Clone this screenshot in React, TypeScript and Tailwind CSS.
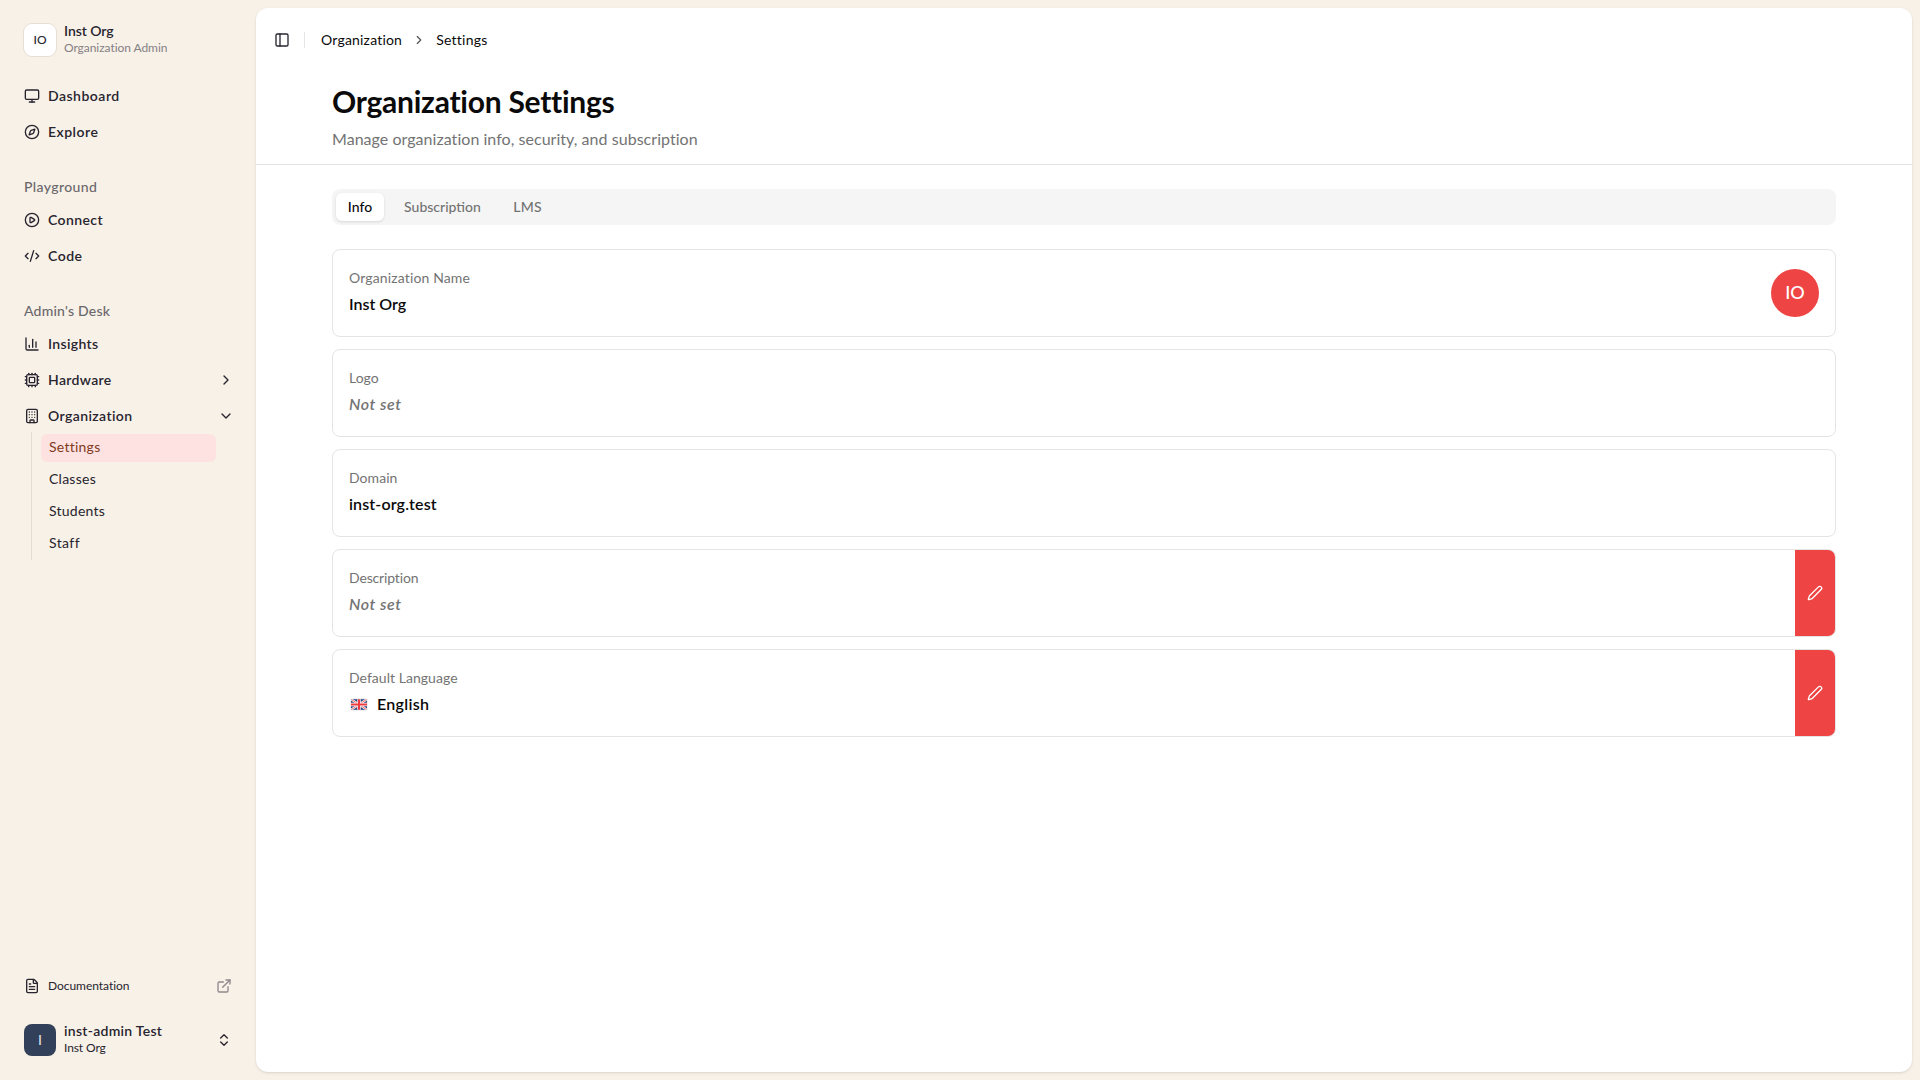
import {
  Building,
  ChartColumn,
  ChevronDown,
  ChevronRight,
  ChevronsUpDown,
  CirclePlay,
  CodeXml,
  Compass,
  Cpu,
  ExternalLink,
  FileText,
  Monitor,
  PanelLeft,
  Pen,
  type LucideIcon,
} from 'lucide-react'

interface NavItemProps {
  icon: LucideIcon
  label: string
  tracking: string
  trailing?: React.ReactNode
}

function NavItem({ icon: Icon, label, tracking, trailing }: NavItemProps) {
  return (
    <button className="flex h-8 w-full items-center gap-2 py-2 pl-2 pr-1.5 text-left text-[14px] font-semibold">
      <Icon size={16} className="shrink-0" />
      <span className={`flex-1 whitespace-nowrap pb-0.5 ${tracking}`}>{label}</span>
      {trailing}
    </button>
  )
}

function GroupLabel({ children, tracking }: { children: React.ReactNode; tracking: string }) {
  return (
    <div className="flex h-8 items-center px-2 text-[14px] font-medium text-[#6b686c]">
      <span className={`pb-[3px] ${tracking}`}>{children}</span>
    </div>
  )
}

const subItems = [
  { label: 'Settings', active: true, tracking: 'tracking-[0.25px]' },
  { label: 'Classes', active: false, tracking: 'tracking-[0.25px]' },
  { label: 'Students', active: false, tracking: 'tracking-[0.25px]' },
  { label: 'Staff', active: false, tracking: 'tracking-[0.4px]' },
]

function Sidebar() {
  return (
    <aside className="flex w-64 shrink-0 flex-col p-2 text-[#27242f]">
      <div className="p-2">
        <button className="flex h-12 w-full items-center gap-2 p-2 text-left">
          <span className="flex size-8 items-center justify-center rounded-lg bg-white text-[12px] font-medium ring-1 ring-[#e6ded4]">
            IO
          </span>
          <span className="grid pb-0.5">
            <span className="text-[14px] font-semibold leading-[17.5px] tracking-[-0.05px]">Inst Org</span>
            <span className="text-[12px] leading-[17px] tracking-[-0.05px] text-[#858085]">Organization Admin</span>
          </span>
        </button>
      </div>

      <div className="flex flex-1 flex-col gap-2">
        <nav className="flex flex-col gap-1 p-2">
          <NavItem icon={Monitor} label="Dashboard" tracking="tracking-[0.5px]" />
          <NavItem icon={Compass} label="Explore" tracking="tracking-[0.5px]" />
        </nav>

        <nav className="p-2">
          <GroupLabel tracking="tracking-[0.4px]">Playground</GroupLabel>
          <div className="flex flex-col gap-1">
            <NavItem icon={CirclePlay} label="Connect" tracking="tracking-[0.4px]" />
            <NavItem icon={CodeXml} label="Code" tracking="tracking-[0.5px]" />
          </div>
        </nav>

        <nav className="p-2">
          <GroupLabel tracking="tracking-[0.22px]">Admin's Desk</GroupLabel>
          <div className="flex flex-col gap-1">
            <NavItem icon={ChartColumn} label="Insights" tracking="tracking-[0.35px]" />
            <NavItem
              icon={Cpu}
              label="Hardware"
              tracking="tracking-[0.35px]"
              trailing={<ChevronRight size={16} />}
            />
            <NavItem
              icon={Building}
              label="Organization"
              tracking="tracking-[0.4px]"
              trailing={<ChevronDown size={16} />}
            />
          </div>
          <ul className="ml-[15px] mr-[13px] flex flex-col gap-1 border-l border-[#e5ddd3] py-0.5 pl-[9px] pr-[11px]">
            {subItems.map(item => (
              <li
                key={item.label}
                className={`flex h-7 items-center rounded-md px-2 text-[14px] ${
                  item.active ? 'bg-[#fee2e2] text-[#7f3a1d]' : ''
                }`}
              >
                <span className={`pb-[3px] ${item.tracking}`}>{item.label}</span>
              </li>
            ))}
          </ul>
        </nav>
      </div>

      <div className="px-2 pb-2">
        <a className="flex h-7 items-center gap-2 px-2 text-[12px]">
          <FileText size={16} />
          <span className="flex-1 tracking-[-0.04px]">Documentation</span>
          <ExternalLink size={16} className="text-[#8f868c]" />
        </a>
      </div>

      <div className="p-2">
        <button className="flex h-12 w-full items-center gap-2 p-2 text-left">
          <span className="flex size-8 items-center justify-center rounded-lg bg-[#334059] pb-0.5 text-[14px] text-[#e5e7eb]">
            I
          </span>
          <span className="grid flex-1 pb-0.5">
            <span className="text-[14px] font-semibold leading-[17.5px] tracking-[0.28px]">inst-admin Test</span>
            <span className="text-[12px] leading-[17px] tracking-[-0.1px]">Inst Org</span>
          </span>
          <ChevronsUpDown size={16} />
        </button>
      </div>
    </aside>
  )
}

function UkFlag() {
  return (
    <svg width="16" height="11" viewBox="0 0 60 40" className="ml-0.5 rounded-[2px] ring-1 ring-[#f1efee]">
      <rect width="60" height="40" fill="#2f4a82" />
      <path d="M0 0L60 40M60 0L0 40" stroke="#fff" strokeWidth="8" />
      <path d="M0 0L60 40M60 0L0 40" stroke="#ef4444" strokeWidth="3" />
      <path d="M30 0V40M0 20H60" stroke="#fff" strokeWidth="13" />
      <path d="M30 0V40M0 20H60" stroke="#ef3b3f" strokeWidth="8" />
    </svg>
  )
}

interface InfoCardProps {
  label: string
  labelTracking: string
  children: React.ReactNode
  unset?: boolean
  editable?: boolean
  avatar?: string
}

function InfoCard({ label, labelTracking, children, unset, editable, avatar }: InfoCardProps) {
  return (
    <div className="flex h-[88px] overflow-hidden rounded-lg border border-[#e3e4e4] bg-white">
      <div className="flex flex-1 items-center justify-between px-4">
        <div className="flex flex-col gap-1 pb-0.5">
          <div className={`text-[14px] leading-5 text-[#737373] ${labelTracking}`}>{label}</div>
          <div
            className={`flex items-center text-[16px] font-semibold leading-6 ${
              unset ? 'italic tracking-[0.55px] text-[#737373]' : 'text-[#0a0a0a]'
            }`}
          >
            {children}
          </div>
        </div>
        {avatar && (
          <div className="flex size-12 items-center justify-center rounded-full bg-[#ef4444] pb-0.5 text-[18px] font-medium text-white">
            {avatar}
          </div>
        )}
      </div>
      {editable && (
        <button className="flex w-10 items-center justify-center bg-[#ef4444] text-white">
          <Pen size={16} />
        </button>
      )}
    </div>
  )
}

export default function App() {
  return (
    <div className="flex h-screen w-full overflow-hidden bg-[#f8f1e7] font-['Lato','Noto_Sans',sans-serif] text-[#0a0a0a]">
      <Sidebar />

      <main className="my-2 mr-2 flex flex-1 flex-col rounded-xl bg-white shadow-sm">
        <header className="flex h-16 items-center gap-2 px-4">
          <button className="-ml-1 flex size-7 items-center justify-center text-[#27242f]">
            <PanelLeft size={16} />
          </button>
          <div className="mr-2 h-4 w-px bg-[#e5e5e5]" />
          <div className="flex items-center gap-2.5 text-[14px]">
            <span className="pb-0.5 tracking-[0.2px]">Organization</span>
            <ChevronRight size={14} className="text-[#525252]" />
            <span className="pb-0.5 tracking-[0.25px]">Settings</span>
          </div>
        </header>

        {/* Page title */}
        <div className="flex h-[93px] flex-col border-b border-[#e3e4e4] px-[76px] pt-[11px]">
          <h1 className="text-[30px] font-bold leading-9 tracking-[-0.25px]">Organization Settings</h1>
          <p className="mt-2 text-[16px] leading-6 tracking-[0.04px] text-[#737373]">
            Manage organization info, security, and subscription
          </p>
        </div>

        <div className="flex flex-col px-[76px] pt-6">
          <div className="flex h-9 items-center gap-2 rounded-lg bg-[#f5f5f5] p-1 text-[14px] font-medium text-[#737373]">
            <button className="h-7 w-12 rounded-md bg-white pb-0.5 text-[#0a0a0a] shadow-sm">Info</button>
            <button className="h-7 w-[101px] pb-0.5">Subscription</button>
            <button className="h-7 w-[53px] pb-0.5 tracking-[0.2px]">LMS</button>
          </div>

          <div className="mt-6 flex flex-col gap-3">
            <InfoCard label="Organization Name" labelTracking="tracking-[0.14px]" avatar="IO">
              <span>Inst Org</span>
            </InfoCard>
            <InfoCard label="Logo" labelTracking="tracking-normal" unset>
              <span>Not set</span>
            </InfoCard>
            <InfoCard label="Domain" labelTracking="tracking-[0.05px]">
              <span className="tracking-[0.14px]">inst-org.test</span>
            </InfoCard>
            <InfoCard label="Description" labelTracking="tracking-[-0.15px]" unset editable>
              <span>Not set</span>
            </InfoCard>
            <InfoCard label="Default Language" labelTracking="tracking-[0.04px]" editable>
              <UkFlag />
              <span className="ml-2.5 tracking-[0.3px]">English</span>
            </InfoCard>
          </div>
        </div>
      </main>
    </div>
  )
}
